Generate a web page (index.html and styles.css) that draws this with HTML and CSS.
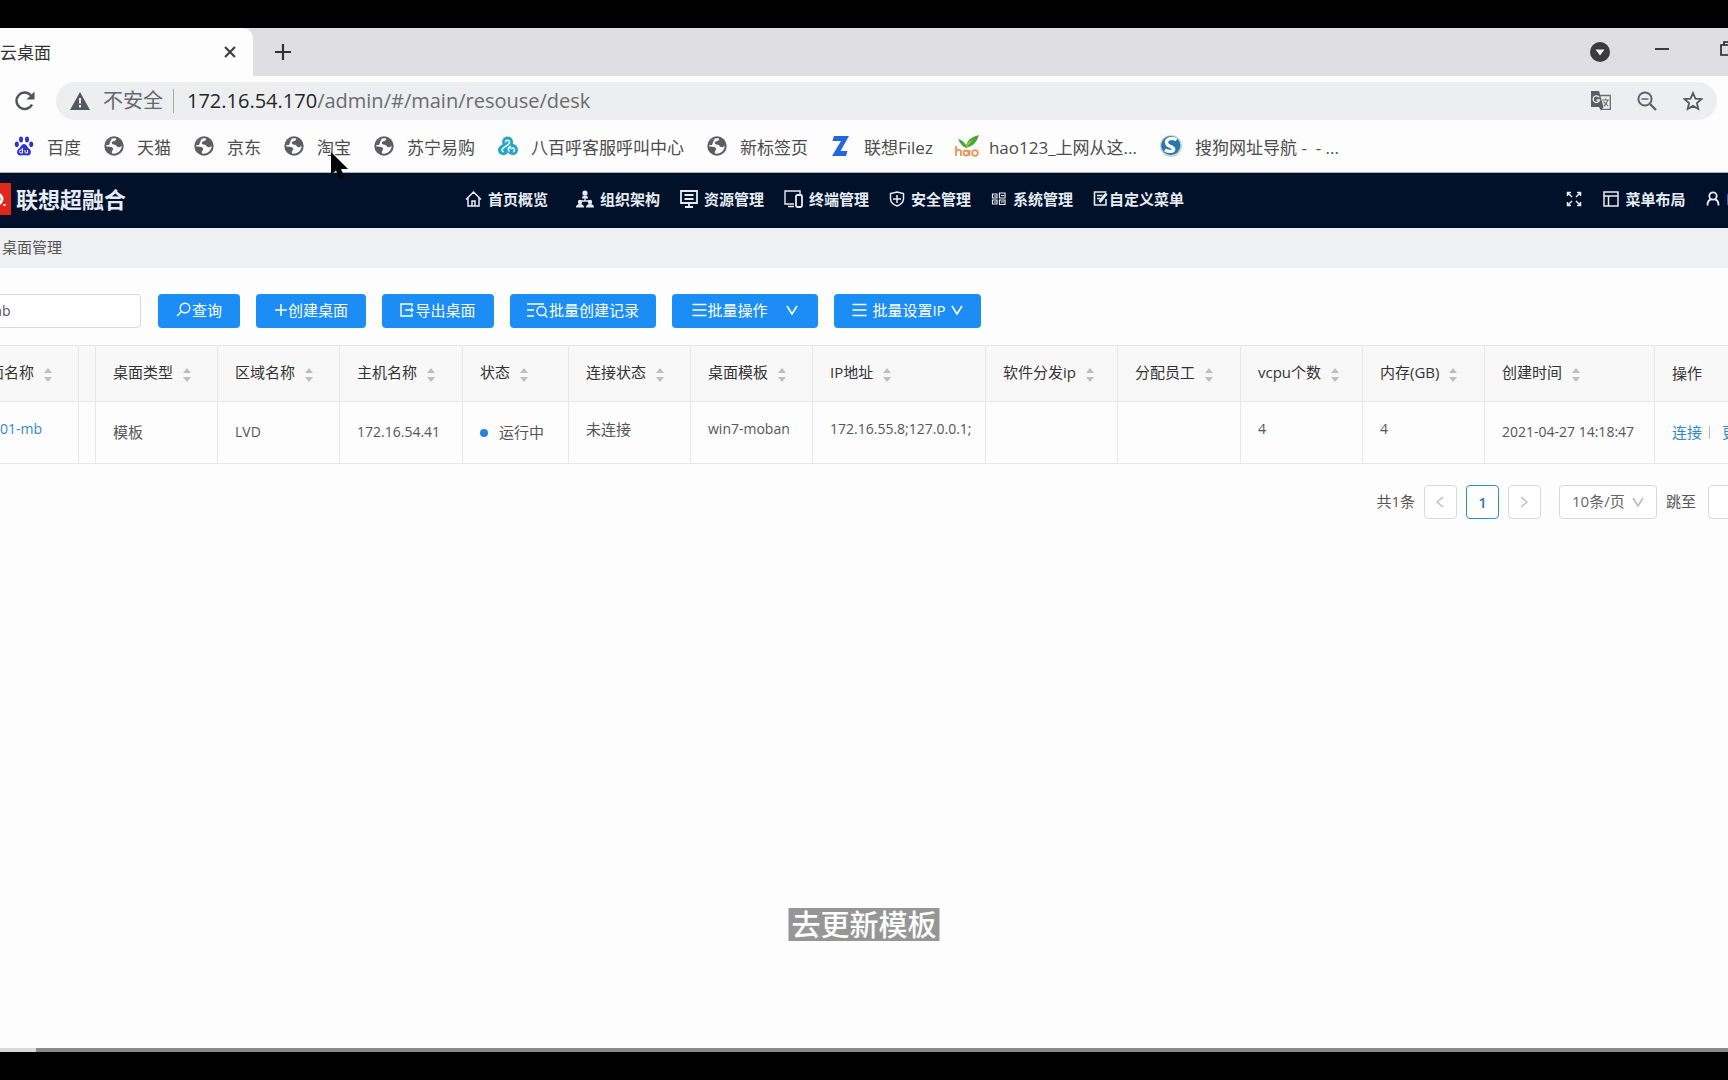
FILE: index.html
```html
<!DOCTYPE html>
<html lang="zh-CN">
<head>
<meta charset="utf-8">
<title>云桌面</title>
<link rel="stylesheet" href="styles.css">
</head>
<body>
<svg class="defs" aria-hidden="true">
  <symbol id="globe" viewBox="0 0 20 20"><circle cx="10" cy="10" r="9.7" fill="#5b5d61"/><path d="M2.300 10.500C4 11 8 10.500 9 12.200 9.800 14 7.200 14.500 8 17.500 13.500 18.500 17.800 14.500 17.600 9.500 16 12.200 13 11.500 12 9.300 10.500 8.300 7.500 8.800 7.800 6.500 8.500 4.500 12 5.500 12.300 2.700 7 1.200 2.300 5 2.300 10.500Z" fill="#fdfdfd"/><path d="M2 9C2.500 5.500 5 3 8 2.400L6.500 5 5 9Z" fill="#5b5d61"/></symbol>
  <symbol id="sort" viewBox="0 0 10 16"><path d="M5 1 9 6H1ZM5 15 1 10H9Z" fill="#bfbfbf"/></symbol>
  <symbol id="down" viewBox="0 0 12 12"><path d="M1 2 6 10 11 2" fill="none" stroke="currentColor" stroke-width="1.600"/></symbol>
  <symbol id="bars" viewBox="0 0 14 14"><path d="M0 1.500H14M0 7H14M0 12.500H14" stroke="currentColor" stroke-width="1.500"/></symbol>
</svg>
<div class="screen">
  <header class="tabs">
    <div class="tab"><span>云桌面</span><button class="plain" aria-label="关闭"><svg width="12" height="12" viewBox="0 0 12 12"><path d="M1 1 11 11M11 1 1 11" stroke="#3c4043" stroke-width="2.200"/></svg></button></div>
    <button class="plain newtab" aria-label="新标签"><svg width="18" height="18" viewBox="0 0 18 18"><path d="M9 1V17M1 9H17" stroke="#303236" stroke-width="2.200"/></svg></button>
    <div class="window-tools">
      <button class="plain" aria-label="标签搜索"><svg width="20" height="20" viewBox="0 0 20 20"><circle cx="10" cy="10" r="10" fill="#3a3b3f"/><path d="M5.500 7.500H14.500L10 13.500Z" fill="#f2f2f4"/></svg></button>
      <button class="plain" aria-label="最小化"><svg width="14" height="12" viewBox="0 0 14 12"><path d="M0 3H14" stroke="#111" stroke-width="1.600"/></svg></button>
      <button class="plain restore" aria-label="还原"><svg width="16" height="16" viewBox="0 0 16 16"><path d="M1 4H12V14H1ZM4 4V1H15V11H12" fill="none" stroke="#222" stroke-width="1.600"/></svg></button>
    </div>
  </header>
  <div class="toolbar">
    <button class="plain" aria-label="刷新"><svg width="22" height="22" viewBox="0 0 22 22"><path d="M18 14.500A8.200 8.200 0 1 1 17 5.500" fill="none" stroke="#505357" stroke-width="2.400"/><path d="M20.500 1.500V9.500H12.500Z" fill="#505357"/></svg></button>
    <div class="address">
      <svg width="20" height="18" viewBox="0 0 20 18"><path d="M10 0 20 18H0Z" fill="#55585c"/><path d="M10 6V11.500M10 13V15.500" stroke="#f1f2f3" stroke-width="2"/></svg>
      <span class="unsafe">不安全</span>
      <span class="url" role="textbox" aria-label="地址"><b>172.16.54.170</b>/admin/#/main/resouse/desk</span>
      <span class="address-tools">
        <button class="plain" aria-label="翻译"><svg width="20" height="20" viewBox="0 0 20 20"><path d="M9 4.500H19.300V18.300H10" fill="none" stroke="#6b6e72" stroke-width="1.300"/><path d="M0 0H8L12.500 16H0Z" fill="#5b5e62"/><path d="M8 16H12.500L10 19.500Z" fill="#5b5e62"/><path d="M8.300 6.500A3.300 3.300 0 1 0 8.600 9H5.500" fill="none" stroke="#eee" stroke-width="1.300"/><path d="M11 9H18M14.500 7.500V9M16.700 9C16 12 14.500 14 12.800 15.200M12.500 10.500 17 15.200" fill="none" stroke="#777" stroke-width="1.200"/></svg></button>
        <button class="plain" aria-label="缩小"><svg width="20" height="20" viewBox="0 0 20 20"><circle cx="8" cy="8" r="6.600" fill="none" stroke="#606368" stroke-width="2"/><path d="M13 13 19 19" stroke="#606368" stroke-width="2.400"/><path d="M4.500 8H11.500" stroke="#606368" stroke-width="1.500"/></svg></button>
        <button class="plain" aria-label="收藏"><svg width="20" height="20" viewBox="0 0 20 20"><path d="M10 2 12.400 7.600 18.500 8.100 13.900 12.100 15.300 18 10 14.900 4.700 18 6.100 12.100 1.500 8.100 7.600 7.600Z" fill="none" stroke="#55585c" stroke-width="1.800"/></svg></button>
      </span>
    </div>
  </div>
  <nav class="bookmarks" aria-label="书签">
    <a href="#"><svg viewBox="0 0 20 20"><g fill="#2f31d0"><ellipse cx="7" cy="3.500" rx="2" ry="3"/><ellipse cx="13" cy="3.500" rx="2" ry="3"/><ellipse cx="2.800" cy="8.300" rx="2" ry="2.800"/><ellipse cx="17.200" cy="8.300" rx="2" ry="2.800"/><path d="M10 8C12.500 8 13 11 15.500 13 18 15 17 20 13.500 19.500 11 19 9 19 6.500 19.500 3 20 2 15 4.500 13 7 11 7.500 8 10 8Z"/></g><path d="M8.500 12V17H7A1.500 1.500 0 0 1 7 14H8.500M11 14V16.500Q11.500 17 13.500 17V14" fill="none" stroke="#fff" stroke-width="1"/></svg>百度</a>
    <a href="#"><svg><use href="#globe"/></svg>天猫</a>
    <a href="#"><svg><use href="#globe"/></svg>京东</a>
    <a href="#"><svg><use href="#globe"/></svg>淘宝</a>
    <a href="#"><svg><use href="#globe"/></svg>苏宁易购</a>
    <a href="#"><svg viewBox="0 0 20 20"><path d="M4.500 8.500C3 4 6 .5 9.500.5 13.500.5 16 4 14.800 8 18.500 8.500 20 11.500 20 14 20 17 17.500 19 15 19 12.500 19 11 18 10 16.500 9 18.500 7.500 19 5.500 19 2.500 19 0 17 0 14 0 11.500 2 9.500 4.500 8.500Z" fill="#26a6c6"/><path d="M7.500 6C7.500 3.500 11.500 3.500 11.500 6.300 11.500 9 8 10 5.500 11.800 3.800 13 3.500 14.500 5 15.600M12.300 10.500C10 12 10 13.500 11 15M13 12.500C16 11 17.500 14 15.500 15.700" fill="none" stroke="#f5fcfd" stroke-width="1.500" stroke-linecap="round"/></svg>八百呼客服呼叫中心</a>
    <a href="#"><svg><use href="#globe"/></svg>新标签页</a>
    <a href="#"><svg viewBox="0 0 20 20"><path d="M3 0H18L9.500 15H16.500L15 20H1L10 5H1.500Z" fill="#2465e0"/></svg>联想Filez</a>
    <a href="#"><svg class="wide" viewBox="0 0 24 22"><path d="M3 4Q8 5 11 10 14 2 24 0 21 11 11 13 6 11 3 4Z" fill="#49a535"/><path d="M11 10Q14 6 19 4L11 13Z" fill="#8acb3c"/><g fill="none" stroke="#ee9458" stroke-width="1.800"><path d="M1 11V21M1 17Q3 13 6 16V21"/><circle cx="11" cy="18" r="2.500"/><path d="M14.500 15V21"/><circle cx="20" cy="18" r="2.800"/></g></svg>hao123_上网从这...</a>
    <a href="#"><svg class="large" viewBox="0 0 20 20"><circle cx="10" cy="10" r="10" fill="#c3d4dc"/><circle cx="9.800" cy="9.500" r="8.700" fill="#2878ad"/><path d="M15 4.500C10 1.500 5 4 6 7.500 7 11 12 10 12.500 13 12.500 15.500 7.500 15.500 4.500 13.500" fill="none" stroke="#fff" stroke-width="3"/></svg>搜狗网址导航 -&nbsp; - ...</a>
  </nav>
  <header class="app-nav">
    <div class="brand"><svg width="11" height="32" viewBox="0 0 11 32"><path d="M0 0H11V32H0Z" fill="#e1261c"/><path d="M-3 11A5 5 0 1 1-3 21" fill="none" stroke="#fff" stroke-width="3"/><path d="M3 22H6" stroke="#fff" stroke-width="1.500"/></svg><h1>联想超融合</h1></div>
    <nav class="menu" aria-label="主菜单">
      <a href="#" class="home"><svg width="17" height="16" viewBox="0 0 17 16"><path d="M1 8.500 8.500 1 16 8.500M3 7V15H14V7M7 15V10H10V15" fill="none" stroke="currentColor" stroke-width="1.500"/></svg>首页概览</a>
      <a href="#"><svg width="18" height="18" viewBox="0 0 18 18"><g fill="currentColor"><circle cx="9" cy="3" r="2.600"/><path d="M6 8.500Q6 5.500 9 5.500T12 8.500Z"/><circle cx="4" cy="12" r="2.200"/><circle cx="14" cy="12" r="2.200"/><path d="M0 17.500Q0 14 4 14T8 17.500ZM10 17.500Q10 14 14 14T18 17.500Z"/></g><path d="M9 8V11M5 11H13" stroke="currentColor" stroke-width="1.300"/></svg>组织架构</a>
      <a href="#"><svg width="18" height="18" viewBox="0 0 18 18"><path d="M1 1H17V13H1ZM4.500 5H13.500M4.500 9H13.500M9 13V17M5 17H13" fill="none" stroke="currentColor" stroke-width="1.800"/></svg>资源管理</a>
      <a href="#"><svg width="19" height="18" viewBox="0 0 19 18"><path d="M10 14H1V1H16V4M4 16.500H10" fill="none" stroke="currentColor" stroke-width="1.400"/><rect x="12" y="5" width="6" height="12" rx="1.500" fill="none" stroke="currentColor" stroke-width="1.800"/></svg>终端管理</a>
      <a href="#"><svg width="16" height="16" viewBox="0 0 16 16"><path d="M8 1 14.500 2.500V8Q14 13 8 15 2 13 1.500 8V2.500ZM8 4V12M4 8H12" fill="none" stroke="currentColor" stroke-width="1.500"/></svg>安全管理</a>
      <a href="#"><svg width="16" height="16" viewBox="0 0 16 16"><path d="M1.500 3H6V7H1.500ZM8.500 2H14V7H8.500ZM1.500 9H6V13H1.500ZM8.500 9H14V13.500H8.500ZM3 5H5M10 4.500H13M3 11H5M10 11H13" fill="none" stroke="currentColor" stroke-width="1.200"/></svg>系统管理</a>
      <a href="#" class="custom"><svg width="15" height="15" viewBox="0 0 14 15"><path d="M12.500 8V14H1V1H13M3.500 4.500H9M3.500 7.500H7" fill="none" stroke="currentColor" stroke-width="1.600"/><path d="M13 2.500 6 11" stroke="currentColor" stroke-width="2.800"/></svg>自定义菜单</a>
    </nav>
    <div class="user-tools">
      <button class="plain" aria-label="全屏"><svg width="16" height="16" viewBox="0 0 16 16"><path d="M1.500 5V1.500H5M11 1.500H14.500V5M1.500 11V14.500H5M11 14.500H14.500V11M2 2 6 6M14 2 10 6M2 14 6 10M14 14 10 10" fill="none" stroke="currentColor" stroke-width="1.500"/></svg></button>
      <a href="#"><svg width="16" height="16" viewBox="0 0 16 16"><path d="M1 1H15V15H1ZM1 5H15M5.500 5V15" fill="none" stroke="currentColor" stroke-width="1.500"/></svg>菜单布局</a>
      <a href="#"><svg width="14" height="15" viewBox="0 0 14 15"><circle cx="7" cy="5" r="3.700" fill="none" stroke="currentColor" stroke-width="1.800"/><path d="M1.500 14.500Q1.500 9 5 8.500M12.500 14.500Q12.500 9 9 8.500" fill="none" stroke="currentColor" stroke-width="1.800"/></svg>l</a>
    </div>
  </header>
  <div class="crumb">桌面管理</div>
  <main>
    <form class="actions">
      <input type="text" value="mb" aria-label="桌面名称">
      <button type="button" class="search"><svg width="15" height="15" viewBox="0 0 15 15"><circle cx="9" cy="6" r="4.800" fill="none" stroke="currentColor" stroke-width="1.400"/><path d="M5.500 9.500 1 14" stroke="currentColor" stroke-width="1.500"/></svg>查询</button>
      <button type="button" class="create"><svg width="14" height="14" viewBox="0 0 14 14"><path d="M7 1V13M1 7H13" stroke="currentColor" stroke-width="1.500"/></svg>创建桌面</button>
      <button type="button" class="export"><svg width="15" height="14" viewBox="0 0 15 14"><path d="M12 3.500V1H1V13H12V10.500M5 7H13M11 5 13 7 11 9" fill="none" stroke="currentColor" stroke-width="1.400"/></svg>导出桌面</button>
      <button type="button" class="records"><svg width="22" height="16" viewBox="0 0 22 16"><path d="M0 2H17M0 8H7M0 14H7" stroke="currentColor" stroke-width="1.400"/><circle cx="14.500" cy="9" r="4.500" fill="none" stroke="currentColor" stroke-width="1.400"/><path d="M17.500 12.500 20.500 15.500" stroke="currentColor" stroke-width="1.400"/></svg>批量创建记录</button>
      <button type="button" class="batch"><svg width="15" height="14"><use href="#bars"/></svg>批量操作<svg class="chev" width="12" height="12"><use href="#down"/></svg></button>
      <button type="button" class="batch-ip"><svg width="15" height="14"><use href="#bars"/></svg>批量设置IP<svg width="12" height="12"><use href="#down"/></svg></button>
    </form>
    <table>
      <colgroup><col class="w122"><col class="w17"><col class="w122"><col class="w122"><col class="w123"><col class="w106"><col class="w122"><col class="w122"><col class="w173"><col class="w132"><col class="w123"><col class="w122"><col class="w122"><col class="w170"><col></colgroup>
      <thead><tr>
        <th>桌面名称<svg><use href="#sort"/></svg></th><th class="empty"></th>
        <th>桌面类型<svg><use href="#sort"/></svg></th>
        <th>区域名称<svg><use href="#sort"/></svg></th>
        <th>主机名称<svg><use href="#sort"/></svg></th>
        <th>状态<svg><use href="#sort"/></svg></th>
        <th>连接状态<svg><use href="#sort"/></svg></th>
        <th>桌面模板<svg><use href="#sort"/></svg></th>
        <th>IP地址<svg><use href="#sort"/></svg></th>
        <th>软件分发ip<svg><use href="#sort"/></svg></th>
        <th>分配员工<svg><use href="#sort"/></svg></th>
        <th>vcpu个数<svg><use href="#sort"/></svg></th>
        <th>内存(GB)<svg><use href="#sort"/></svg></th>
        <th>创建时间<svg><use href="#sort"/></svg></th>
        <th>操作</th>
      </tr></thead>
      <tbody><tr>
        <td class="name raised"><a href="#">01-mb</a></td><td class="empty"></td>
        <td>模板</td><td class="latin">LVD</td><td class="latin">172.16.54.41</td>
        <td><span class="dot"></span>运行中</td>
        <td class="raised">未连接</td><td class="latin raised">win7-moban</td>
        <td class="latin raised">172.16.55.8;127.0.0.1;</td><td></td><td></td>
        <td class="latin raised">4</td><td class="latin raised">4</td>
        <td class="latin">2021-04-27 14:18:47</td>
        <td><a href="#">连接</a><span class="bar"></span><a href="#">更</a></td>
      </tr></tbody>
    </table>
    <div class="pager">
      <span class="total">共1条</span>
      <button class="page" aria-label="上一页"><svg width="8" height="12" viewBox="0 0 8 12"><path d="M7 1 1 6 7 11" fill="none" stroke="#bbb" stroke-width="1.300"/></svg></button>
      <button class="page current">1</button>
      <button class="page" aria-label="下一页"><svg width="8" height="12" viewBox="0 0 8 12"><path d="M1 1 7 6 1 11" fill="none" stroke="#bbb" stroke-width="1.300"/></svg></button>
      <label class="size"><select aria-label="每页条数"><option>10条/页</option></select><svg width="12" height="12"><use href="#down"/></svg></label>
      <label class="jump"><span>跳至</span><input type="text"></label>
    </div>
  </main>
  <div class="scroll"></div>
  <div class="caption">去更新模板</div>
  <svg class="cursor" width="18" height="27" viewBox="0 0 18 27"><path d="M0 0V23L5 18.500 9 27 13.500 25 10 17H17Z" fill="#050505"/></svg>
</div>
</body>
</html>
```
FILE: styles.css
```css
* { box-sizing: border-box; }
body { margin: 0; background: #000; font-family: "Open Sans", "Noto Sans CJK SC", sans-serif; font-size: 15px; color: #555; }
button, input, select { font: inherit; color: inherit; margin: 0; }
a { text-decoration: none; color: inherit; }
svg { flex: none; }
.defs { position: absolute; width: 0; height: 0; }
.plain { border: 0; padding: 0; background: none; display: flex; }
.screen { position: relative; min-height: 100vh; padding: 28px 0; display: flex; flex-direction: column; overflow: hidden; }

.tabs { display: flex; align-items: center; height: 48px; background: #dfdfe3; overflow: hidden; }
.tab { display: flex; align-items: center; justify-content: space-between; width: 253px; height: 100%; padding-right: 17px; border-radius: 0 10px 0 0; background: #fdfdfd; font-size: 17px; color: #333; }
.tab span { padding-bottom: 2px; }
.newtab { margin-left: 21px; }
.window-tools { display: flex; align-items: center; gap: 45px; margin: 0 -8px 0 auto; }
.window-tools .restore { margin: 0 0 6px 6px; }

.toolbar { display: flex; align-items: center; gap: 20px; height: 50px; padding: 0 11px 0 14px; background: #fdfdfd; }
.address { flex: 1; display: flex; align-items: center; height: 38px; padding: 0 14px; border-radius: 19px; background: #eceeef; }
.unsafe { margin: 0 10px 0 13px; font-size: 20px; line-height: 24px; color: #66696d; }
.url { padding-left: 13px; border-left: 1px solid #a5a7aa; font-size: 20px; line-height: 24px; color: #6a6d71; }
.url b { font-weight: 400; color: #25272a; }
.address-tools { display: flex; gap: 26px; margin-left: auto; }

.bookmarks { display: flex; align-items: center; gap: 23px; height: 47px; padding: 0 14px 6px; background: #fdfdfd; border-bottom: 1px solid #a9b0b9; font-size: 17px; color: #4c4c4c; white-space: nowrap; }
.bookmarks a { display: flex; align-items: center; gap: 13px; }
.bookmarks svg { width: 20px; height: 20px; }
.bookmarks .wide { width: 24px; height: 22px; margin: 0 -3px 0 -1px; }
.bookmarks .large { width: 22px; height: 22px; }

.app-nav { display: flex; align-items: center; height: 55px; padding-bottom: 4px; background: #001129; color: #e6ecf5; white-space: nowrap; font-weight: 700; overflow: hidden; }
.brand { display: flex; align-items: center; gap: 5px; width: 465px; }
.brand h1 { margin: 0; padding-bottom: 2px; font-size: 22px; font-weight: 700; }
.menu { display: flex; align-items: center; gap: 20px; }
.menu a, .user-tools a { display: flex; align-items: center; gap: 6px; }
.menu .home { margin-right: 8px; }
.menu .custom { gap: 1px; }
.user-tools { display: flex; align-items: center; gap: 21px; margin: 0 -3px 0 auto; }

.crumb { height: 40px; padding-left: 2px; background: #eef0f2; line-height: 38px; }

main { flex: 1; background: #fdfdfd; padding-top: 26px; overflow: hidden; }
.actions { display: flex; gap: 16px; margin-left: -24px; }
.actions input { width: 165px; height: 34px; padding: 0 12px 2px; border: 1px solid #d9d9d9; border-radius: 4px; background: #fff; font-size: 14px; }
.actions button { display: flex; align-items: center; justify-content: center; height: 34px; padding: 0 0 3px; border: 0; border-radius: 4px; background: #1b8df5; color: #fff; }
.actions .search { width: 82px; margin-left: 1px; gap: 1px; }
.actions .create { width: 110px; }
.actions .export { width: 112px; }
.actions .records { width: 146px; }
.actions .batch { width: 146px; }
.actions .chev { margin-left: 18px; }
.actions .batch-ip { width: 147px; gap: 5px; }

table { width: calc(100% + 104px); margin: 17px 0 0 -44px; table-layout: fixed; border-collapse: collapse; white-space: nowrap; }
th, td { padding: 0 0 3px 17px; text-align: left; border: 1px solid #e4e8eb; }
th { height: 56px; background: #f8f8f8; font-weight: 400; color: #333; }
th svg { width: 10px; height: 16px; margin-left: 9px; vertical-align: -5px; }
td { height: 62px; }
.latin, .name { font-size: 14px; }
.name { padding-left: 43px; }
.empty { padding: 0; }
td.raised { padding-bottom: 8px; }
td a { color: #3389cf; }
.w17 { width: 17px; } .w106 { width: 106px; } .w122 { width: 122px; } .w123 { width: 123px; }
.w132 { width: 132px; } .w170 { width: 170px; } .w173 { width: 173px; }
.dot { display: inline-block; width: 8px; height: 8px; margin: 0 11px 1px 0; border-radius: 50%; background: #2484da; }
.bar { display: inline-block; width: 1px; height: 13px; margin: 0 12px 0 7px; background: #bbb; vertical-align: -1px; }

.pager { display: flex; align-items: center; justify-content: flex-end; gap: 9px; margin: 21px -32px 0 0; }
.total, .jump span { padding-bottom: 3px; }
.page { display: flex; align-items: center; justify-content: center; width: 33px; height: 34px; padding: 0; border: 1px solid #d9d9d9; border-radius: 4px; background: #fff; }
.current { border-color: #2b8fc4; color: #2680b8; font-weight: 600; }
.size { position: relative; display: flex; align-items: center; margin-left: 9px; color: #666; }
.size select { appearance: none; width: 98px; height: 34px; padding: 0 12px 2px; border: 1px solid #d9d9d9; border-radius: 4px; background: #fff; }
.size svg { position: absolute; right: 13px; color: #bbb; }
.jump { display: flex; align-items: center; gap: 12px; }
.jump input { width: 52px; height: 34px; border: 1px solid #d9d9d9; border-radius: 4px; background: #fff; }

.scroll { height: 4px; margin-top: -4px; background: linear-gradient(90deg, #d9d9d9 36px, #8a8a8a 36px); }
.caption { position: absolute; left: 50%; bottom: 139px; transform: translateX(-50%); padding: 0 3px; background: #969696; color: #fff; font-size: 29px; font-weight: 500; line-height: 33px; }
.cursor { position: absolute; left: 331px; top: 152px; }
```
